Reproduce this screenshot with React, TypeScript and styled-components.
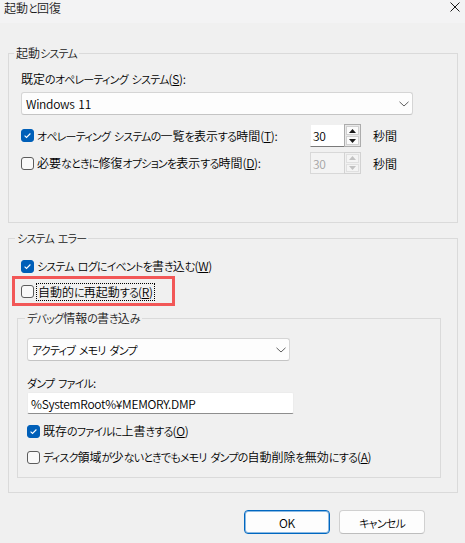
import React from "react";
import styled, { createGlobalStyle } from "styled-components";

const Global = createGlobalStyle`
  html, body { margin: 0; padding: 0; background: #f0f0f0; }
  body {
    font-family: "Noto Sans CJK JP", "Noto Sans", sans-serif;
    font-size: 12px;
    font-weight: 350;
    color: #000;
    font-feature-settings: "palt";
  }
  #root { width: 465px; height: 543px; overflow: hidden; }
  * { box-sizing: border-box; }
`;

const Kana = styled.span`
  font-size: 11px;
  letter-spacing: -0.8px;
`;

const Latin = styled.span`
  letter-spacing: -0.3px;
  word-spacing: 1.5px;
`;

const T: React.FC<{ s: string }> = ({ s }) => {
  const out: React.ReactNode[] = [];
  const re = /([\u3041-\u30ff]+)|([\x20-\x7e\u00a5]+)/g;
  let last = 0;
  let k = 0;
  let m: RegExpExecArray | null;
  while ((m = re.exec(s))) {
    if (m.index > last) out.push(s.slice(last, m.index));
    out.push(m[1] ? <Kana key={k++}>{m[1]}</Kana> : <Latin key={k++}>{m[2]}</Latin>);
    last = m.index + m[0].length;
  }
  if (last < s.length) out.push(s.slice(last));
  return <>{out}</>;
};

const Window = styled.div`
  width: 465px;
  height: 543px;
  background: #f0f0f0;
  display: flex;
  flex-direction: column;
`;

const TitleBar = styled.div`
  height: 23px;
  flex: none;
  background: #f3f3f4;
  display: flex;
  justify-content: space-between;
  align-items: flex-start;
  padding: 0 5px 0 4px;
  line-height: 16px;
`;

const Title = styled.span`
  color: #1a1a1a;
`;

const CloseIcon = styled.svg`
  margin-top: 2px;
`;

const Body = styled.div`
  padding: 23px 7px 0 8px;
  display: flex;
  flex-direction: column;
`;

const Group = styled.fieldset<{ $pad: string; $mt?: number }>`
  margin: ${(p) => p.$mt ?? 0}px 0 0 0;
  border: 1px solid #dadada;
  padding: ${(p) => p.$pad};
  min-width: 0;
  display: flex;
  flex-direction: column;
`;

const Legend = styled.legend<{ $ml: number }>`
  padding: 0 2px;
  margin-left: ${(p) => p.$ml}px;
  line-height: 14px;
  color: #1a1a1a;
`;

const FieldLabel = styled.div<{ $mt?: number }>`
  line-height: 16px;
  margin-top: ${(p) => p.$mt ?? 0}px;
`;

const Combo = styled.div<{ $w: number; $mt?: number }>`
  width: ${(p) => p.$w}px;
  height: 23px;
  margin-top: ${(p) => p.$mt ?? 0}px;
  background: #fdfdfd;
  border: 1px solid #d5d5d5;
  border-bottom-color: #c4c4c4;
  border-radius: 3px;
  display: flex;
  align-items: center;
  justify-content: space-between;
  padding: 0 3px 0 4px;
`;

const TextBox = styled.div<{ $w: number; $mt?: number }>`
  width: ${(p) => p.$w}px;
  height: 22px;
  margin-top: ${(p) => p.$mt ?? 0}px;
  background: #fff;
  border: 1px solid #ececec;
  border-bottom-color: #8e8e8e;
  border-radius: 2px;
  display: flex;
  align-items: center;
  padding: 0 3px;
`;

const SpinGrid = styled.div`
  margin-top: 9px;
  display: grid;
  grid-template-columns: 289px 51px auto;
  grid-template-rows: 23px 22px;
  row-gap: 5px;
  align-items: center;
`;

const Spin = styled.div<{ $h: number }>`
  height: ${(p) => p.$h}px;
  display: flex;
`;

const SpinInput = styled.div<{ $disabled?: boolean }>`
  width: 34px;
  height: 100%;
  background: ${(p) => (p.$disabled ? "#f3f3f3" : "#fff")};
  border: 1px solid ${(p) => (p.$disabled ? "#d8d8d8" : "#f0f0f0")};
  border-bottom-color: ${(p) => (p.$disabled ? "#d8d8d8" : "#7a7a7a")};
  border-right: none;
  color: ${(p) => (p.$disabled ? "#a3a3a3" : "#000")};
  display: flex;
  align-items: center;
  padding-left: 2px;
`;

const SpinButtons = styled.div<{ $disabled?: boolean }>`
  width: 17px;
  height: 100%;
  border: 1px solid ${(p) => (p.$disabled ? "#d2d2d2" : "#acacac")};
  display: flex;
  flex-direction: column;
  padding: 1px;
  gap: 1px;
  background: ${(p) => (p.$disabled ? "#f0f0f0" : "#e8e8e8")};
`;

const SpinBtn = styled.div<{ $disabled?: boolean }>`
  flex: 1;
  background: ${(p) => (p.$disabled ? "#f4f4f4" : "#fbfbfb")};
  border: 1px solid ${(p) => (p.$disabled ? "#e0e0e0" : "#d0d0d0")};
  display: flex;
  align-items: center;
  justify-content: center;
`;

const Unit = styled.span`
  margin-left: 12px;
`;

const Row = styled.div<{ $h: number; $mt?: number; $pl?: number }>`
  height: ${(p) => p.$h}px;
  margin-top: ${(p) => p.$mt ?? 0}px;
  padding-left: ${(p) => p.$pl ?? 0}px;
  display: flex;
  align-items: center;
  white-space: nowrap;
`;

const RedFrame = styled.div`
  width: 163px;
  height: 30px;
  margin-left: -5px;
  border: 3px solid #f25757;
  display: flex;
  align-items: center;
  padding: 1px 0 0 6px;
`;

const Box = styled.span<{ $checked?: boolean }>`
  width: 13px;
  height: 13px;
  flex: none;
  border-radius: 3px;
  background: ${(p) => (p.$checked ? "#005fb8" : "#f9f9f9")};
  border: 1px solid ${(p) => (p.$checked ? "#005fb8" : "#5c5c5c")};
  display: flex;
  align-items: center;
  justify-content: center;
`;

const CheckText = styled.span`
  margin-left: 3px;
  line-height: 16px;
`;

const FocusText = styled.span`
  margin-left: 2px;
  line-height: 16px;
  border: 1px dotted #000;
  padding: 0 1px;
`;

const Key = styled.u`
  text-underline-offset: 1px;
  letter-spacing: -0.3px;
`;

const Buttons = styled.div`
  margin-top: 17px;
  display: flex;
  justify-content: flex-end;
  gap: 9px;
  padding-right: 33px;
`;

const Button = styled.button<{ $primary?: boolean }>`
  width: 86px;
  height: 24px;
  padding: 0;
  font: inherit;
  font-size: 12px;
  color: #000;
  background: #fdfdfd;
  border-radius: 4px;
  border: 1px solid ${(p) => (p.$primary ? "#0067c0" : "#d0d0d0")};
  border-bottom-color: ${(p) => (p.$primary ? "#0067c0" : "#bdbdbd")};
  box-shadow: ${(p) => (p.$primary ? "inset 0 0 0 1px rgba(0,103,192,0.45)" : "none")};
`;

const Chevron = () => (
  <svg width="10" height="6" viewBox="0 0 10 6">
    <path d="M0.5 0.8 L5 5 L9.5 0.8" fill="none" stroke="#5f5f5f" strokeWidth="1" />
  </svg>
);

const Check: React.FC<{ checked?: boolean }> = ({ checked }) => (
  <Box $checked={checked}>
    {checked && (
      <svg width="9" height="9" viewBox="0 0 9 9">
        <path d="M1.6 4.7 L3.5 6.5 L7.4 2.5" fill="none" stroke="#fff" strokeWidth="1.1" />
      </svg>
    )}
  </Box>
);

const Arrow: React.FC<{ up?: boolean; disabled?: boolean }> = ({ up, disabled }) => (
  <svg width="7" height="4" viewBox="0 0 7 4">
    <path d={up ? "M0 4 L3.5 0 L7 4 Z" : "M0 0 L7 0 L3.5 4 Z"} fill={disabled ? "#c2c2c2" : "#1a1a1a"} />
  </svg>
);

const SpinBox: React.FC<{ h: number; disabled?: boolean }> = ({ h, disabled }) => (
  <Spin $h={h}>
    <SpinInput $disabled={disabled}>
      <T s="30" />
    </SpinInput>
    <SpinButtons $disabled={disabled}>
      <SpinBtn $disabled={disabled}>
        <Arrow up disabled={disabled} />
      </SpinBtn>
      <SpinBtn $disabled={disabled}>
        <Arrow disabled={disabled} />
      </SpinBtn>
    </SpinButtons>
  </Spin>
);

export default function App() {
  return (
    <Window>
      <Global />
      <TitleBar>
        <Title>
          <T s="起動と回復" />
        </Title>
        <CloseIcon width="10" height="10" viewBox="0 0 10 10">
          <path d="M0.5 0.5 L9.5 9.5 M9.5 0.5 L0.5 9.5" stroke="#1a1a1a" strokeWidth="1" />
        </CloseIcon>
      </TitleBar>
      <Body>
        <Group $pad="11px 12px 48px 12px">
          <Legend $ml={-7}>
            <T s="起動システム" />
          </Legend>
          <FieldLabel>
            <T s="既定のオペレーティング システム(" />
            <Key>S</Key>
            <T s="):" />
          </FieldLabel>
          <Combo $w={392} $mt={5}>
            <span>
              <T s="Windows 11" />
            </span>
            <Chevron />
          </Combo>
          <SpinGrid>
            <Row $h={23}>
              <Check checked />
              <CheckText>
                <T s="オペレーティング システムの一覧を表示する時間(" />
                <Key>T</Key>
                <T s="):" />
              </CheckText>
            </Row>
            <SpinBox h={23} />
            <Unit>
              <T s="秒間" />
            </Unit>
            <Row $h={22}>
              <Check />
              <CheckText>
                <T s="必要なときに修復オプションを表示する時間(" />
                <Key>D</Key>
                <T s="):" />
              </CheckText>
            </Row>
            <SpinBox h={22} disabled />
            <Unit>
              <T s="秒間" />
            </Unit>
          </SpinGrid>
        </Group>

        <Group $pad="11px 16px 14px 8px" $mt={8}>
          <Legend $ml={-2}>
            <T s="システム エラー" />
          </Legend>
          <Row $h={20} $pl={4}>
            <Check checked />
            <CheckText>
              <T s="システム ログにイベントを書き込む(" />
              <Key>W</Key>
              <T s=")" />
            </CheckText>
          </Row>
          <RedFrame>
            <Check />
            <FocusText>
              <T s="自動的に再起動する(" />
              <Key>R</Key>
              <T s=")" />
            </FocusText>
          </RedFrame>
          <Group $pad="13px 9px 11px 9px" $mt={5}>
            <Legend $ml={-2}>
              <T s="デバッグ情報の書き込み" />
            </Legend>
            <Combo $w={263}>
              <span>
                <T s="アクティブ メモリ ダンプ" />
              </span>
              <Chevron />
            </Combo>
            <FieldLabel $mt={14}>
              <T s="ダンプ ファイル:" />
            </FieldLabel>
            <TextBox $w={267} $mt={1}>
              <T s="%SystemRoot%¥MEMORY.DMP" />
            </TextBox>
            <Row $h={18} $mt={8}>
              <Check checked />
              <CheckText>
                <T s="既存のファイルに上書きする(" />
                <Key>O</Key>
                <T s=")" />
              </CheckText>
            </Row>
            <Row $h={18} $mt={8}>
              <Check />
              <CheckText>
                <T s="ディスク領域が少ないときでもメモリ ダンプの自動削除を無効にする(" />
                <Key>A</Key>
                <T s=")" />
              </CheckText>
            </Row>
          </Group>
        </Group>

        <Buttons>
          <Button $primary>
            <T s="OK" />
          </Button>
          <Button>
            <T s="キャンセル" />
          </Button>
        </Buttons>
      </Body>
    </Window>
  );
}
